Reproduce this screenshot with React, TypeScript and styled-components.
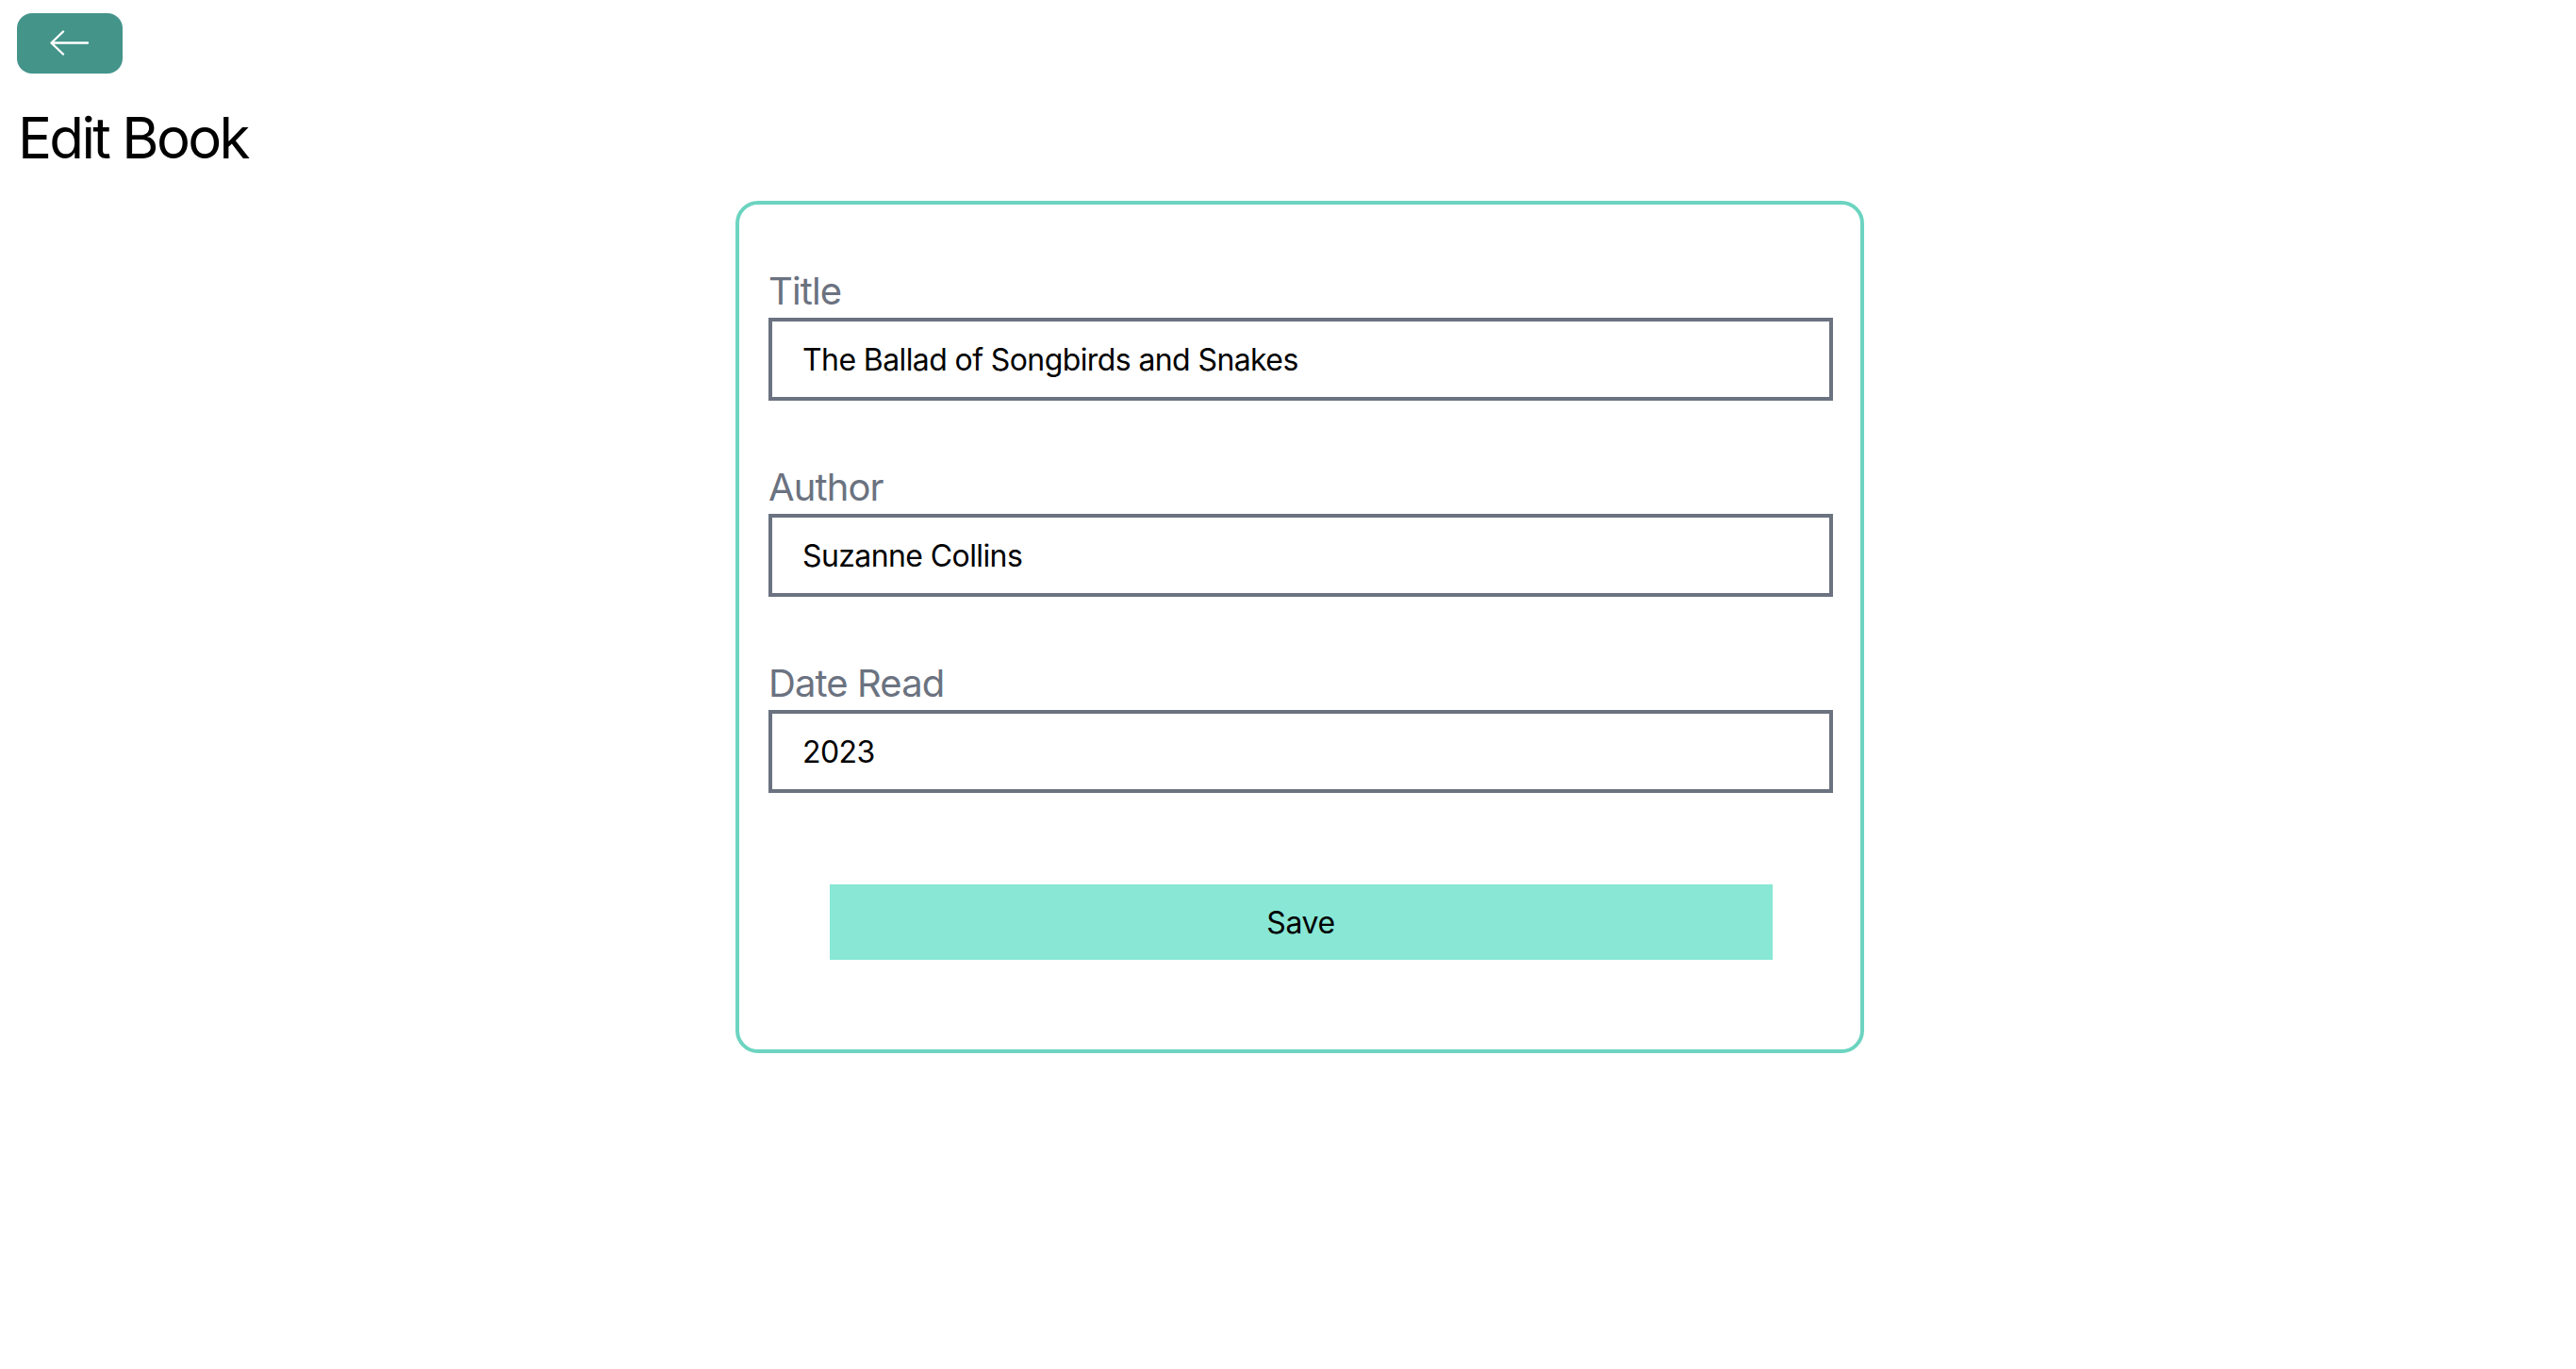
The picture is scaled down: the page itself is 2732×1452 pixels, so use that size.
import React from "react";
import styled, { createGlobalStyle } from "styled-components";

const GlobalStyle = createGlobalStyle`
  html, body {
    margin: 0;
    padding: 0;
    background: #ffffff;
    font-family: Inter, "Noto Sans", "Liberation Sans", sans-serif;
    color: #000000;
  }
  * { box-sizing: border-box; }
`;

const Page = styled.div`
  padding: 14px 18px 0 18px;
  display: flex;
  flex-direction: column;
  align-items: stretch;
`;

const BackButton = styled.button`
  width: 112px;
  height: 64px;
  border: none;
  border-radius: 16px;
  background: #44948a;
  display: flex;
  align-items: center;
  justify-content: center;
  padding: 0;
  cursor: pointer;
`;

const Heading = styled.h1`
  margin: 32px 0 0 1px;
  font-size: 60px;
  line-height: 72px;
  font-weight: 400;
  letter-spacing: -2.7px;
`;

const Card = styled.form`
  align-self: center;
  width: 1197px;
  margin: 31px 0 0 25px;
  border: 4px solid #6cd4c0;
  border-radius: 24px;
  padding: 32px 29px 31px 31px;
  display: flex;
  flex-direction: column;
`;

const Field = styled.div`
  margin: 32px 0;
  display: flex;
  flex-direction: column;
`;

const Label = styled.label`
  font-size: 40px;
  line-height: 56px;
  color: #6b7280;
  letter-spacing: -0.9px;
`;

const Input = styled.input`
  height: 88px;
  border: 4px solid #6b7280;
  border-radius: 0;
  padding: 0 32px;
  font-family: Inter, "Noto Sans", "Liberation Sans", sans-serif;
  font-size: 32px;
  color: #000000;
  background: #ffffff;
  outline: none;
  letter-spacing: -0.6px;
`;

const Actions = styled.div`
  display: flex;
  justify-content: center;
  margin: 65px 0 64px 0;
`;

const SaveButton = styled.button`
  width: 1000px;
  height: 80px;
  border: none;
  background: #88e7d5;
  font-family: Inter, "Noto Sans", "Liberation Sans", sans-serif;
  font-size: 32px;
  color: #000000;
  letter-spacing: -0.4px;
  cursor: pointer;
`;

const ArrowIcon = () => (
  <svg width="44" height="28" viewBox="0 0 44 28" fill="none">
    <path
      d="M41 13.5 H3 M15 1.5 L2.5 13.5 L15 25.5"
      stroke="#ffffff"
      strokeWidth="2.4"
      strokeLinecap="round"
      strokeLinejoin="round"
    />
  </svg>
);

const fields = [
  { id: "title", label: "Title", value: "The Ballad of Songbirds and Snakes" },
  { id: "author", label: "Author", value: "Suzanne Collins" },
  { id: "date", label: "Date Read", value: "2023" },
];

export default function App() {
  return (
    <>
      <GlobalStyle />
      <Page>
        <div>
          <BackButton type="button" aria-label="Back">
            <ArrowIcon />
          </BackButton>
        </div>
        <Heading>Edit Book</Heading>
        <Card onSubmit={(e) => e.preventDefault()}>
          {fields.map((f) => (
            <Field key={f.id}>
              <Label htmlFor={f.id}>{f.label}</Label>
              <Input id={f.id} type="text" defaultValue={f.value} />
            </Field>
          ))}
          <Actions>
            <SaveButton type="submit">Save</SaveButton>
          </Actions>
        </Card>
      </Page>
    </>
  );
}
